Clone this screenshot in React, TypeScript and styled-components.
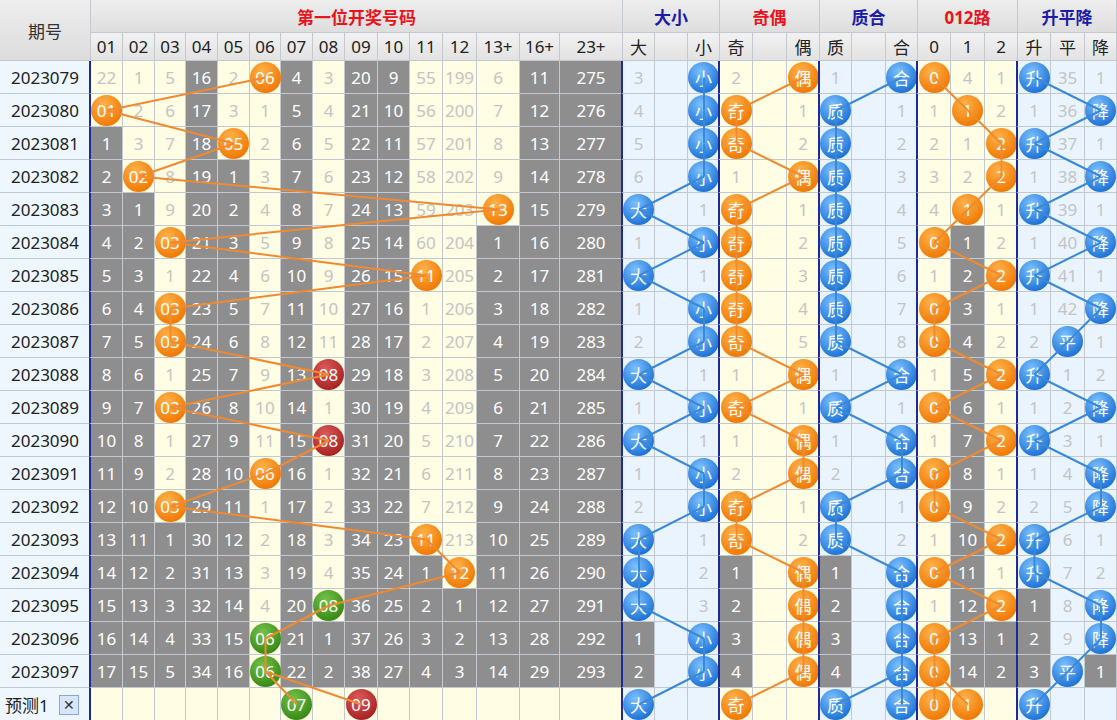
import React from "react"
import styled, { createGlobalStyle } from "styled-components"

const GlobalStyle = createGlobalStyle`
    html, body { margin: 0; padding: 0; background: #fff; }
    body { font-family: "Noto Sans", "Noto Sans CJK SC", sans-serif; }
`

const PERIOD_W = 91
const NUM_W = [32, 32, 31, 32, 32, 31, 32, 32, 33, 32, 33, 34, 43, 40, 63]
const NUM_LABELS = ["01", "02", "03", "04", "05", "06", "07", "08", "09", "10", "11", "12", "13+", "16+", "23+"]
const HEAD1 = 33
const HEAD2 = 28
const ROW_H = 33

const FIRST = [6, 1, 5, 2, 13, 3, 11, 3, 3, 8, 3, 8, 6, 3, 11, 12, 8, 6, 6]
const PERIODS = FIRST.map((_, i) => `2023${String(79 + i).padStart(3, "0")}`)

type Tone = "orange" | "blue" | "red" | "green"
type Section = {
    title: string
    titleColor: string
    labels: string[]
    widths: number[]
    bg: string
    tone: Tone
    hits: number[]
    init: number[]
    blank?: number
    pred: number[]
    ballText: (c: number) => string
    predTone?: (c: number) => Tone
    rowTone?: (r: number) => Tone
}

const numCol = (v: number) => (v <= 12 ? v - 1 : v < 16 ? 12 : v < 23 ? 13 : 14)
const isPrime = (v: number) => [1, 2, 3, 5, 7, 11, 13].includes(v)
const trend = FIRST.map((v, i) => (i === 0 ? 0 : v > FIRST[i - 1] ? 0 : v === FIRST[i - 1] ? 1 : 2))

const SECTIONS: Section[] = [
    {
        title: "第一位开奖号码", titleColor: "#e8141c", labels: NUM_LABELS, widths: NUM_W, bg: "#fffde3", tone: "orange",
        hits: FIRST.map(numCol), init: [21, 0, 4, 15, 1, 0, 3, 2, 19, 8, 54, 198, 5, 10, 274], pred: [6, 8],
        ballText: (c) => "", predTone: (c) => (c === 6 ? "green" : "red"),
        rowTone: (r) => (r === 9 || r === 11 ? "red" : r >= 16 && r !== 16 ? "green" : r === 16 ? "green" : "orange"),
    },
    {
        title: "大小", titleColor: "#1c1ca8", labels: ["大", "", "小"], widths: [32, 33, 32], bg: "#eaf4fe", tone: "blue",
        hits: FIRST.map((v) => (v >= 7 ? 0 : 2)), init: [2, 0, 0], blank: 1, pred: [0], ballText: (c) => (c === 0 ? "大" : "小"),
    },
    {
        title: "奇偶", titleColor: "#e8141c", labels: ["奇", "", "偶"], widths: [33, 34, 33], bg: "#fffde3", tone: "orange",
        hits: FIRST.map((v) => (v % 2 ? 0 : 2)), init: [1, 0, 0], blank: 1, pred: [0], ballText: (c) => (c === 0 ? "奇" : "偶"),
    },
    {
        title: "质合", titleColor: "#1c1ca8", labels: ["质", "", "合"], widths: [32, 34, 32], bg: "#eaf4fe", tone: "blue",
        hits: FIRST.map((v) => (isPrime(v) ? 0 : 2)), init: [0, 0, 0], blank: 1, pred: [0, 2], ballText: (c) => (c === 0 ? "质" : "合"),
    },
    {
        title: "012路", titleColor: "#e8141c", labels: ["0", "1", "2"], widths: [33, 34, 33], bg: "#fffde3", tone: "orange",
        hits: FIRST.map((v) => v % 3), init: [0, 3, 0], pred: [0, 1], ballText: (c) => String(c),
    },
    {
        title: "升平降", titleColor: "#1c1ca8", labels: ["升", "平", "降"], widths: [33, 34, 32], bg: "#eaf4fe", tone: "blue",
        hits: trend, init: [0, 34, 0], pred: [0], ballText: (c) => ["升", "平", "降"][c],
    },
]

type Cell = { text: string; ball: boolean; gray: boolean }

const buildRows = (s: Section): Cell[][] => {
    const miss = s.init.slice()
    const last = s.labels.map((_, c) => s.hits.lastIndexOf(c))
    return s.hits.map((hit, r) =>
        s.labels.map((_, c) => {
            if (c === s.blank) return { text: "", ball: false, gray: false }
            if (hit === c) {
                miss[c] = 0
                return { text: "", ball: true, gray: false }
            }
            miss[c] += 1
            return { text: String(miss[c]), ball: false, gray: r > last[c] }
        })
    )
}

const TONES: Record<Tone, { hi: string; lo: string; line: string }> = {
    orange: { hi: "#ffb24a", lo: "#f07a06", line: "#f08a30" },
    blue: { hi: "#7cc0ff", lo: "#1f74d6", line: "#3a88d8" },
    red: { hi: "#dd5a5a", lo: "#a82424", line: "#f08a30" },
    green: { hi: "#74c248", lo: "#3a8a18", line: "#f08a30" },
}

const App: React.FC = () => {
    let x = PERIOD_W
    const sectionX = SECTIONS.map((s) => {
        const start = x
        const centers = s.widths.map((w) => {
            const cx = x + w / 2
            x += w
            return cx
        })
        return { start, centers }
    })
    const cy = (r: number) => HEAD1 + HEAD2 + r * ROW_H + ROW_H / 2

    const lines: React.ReactNode[] = []
    SECTIONS.forEach((s, si) => {
        const cx = sectionX[si].centers
        const color = TONES[s.tone].line
        for (let r = 0; r < s.hits.length; r++) {
            const targets = r === s.hits.length - 1 ? s.pred : [s.hits[r + 1]]
            targets.forEach((t, k) => {
                lines.push(
                    <line key={`${si}-${r}-${k}`} x1={cx[s.hits[r]]} y1={cy(r)} x2={cx[t]} y2={cy(r + 1)}
                        stroke={color} strokeWidth={2} />
                )
            })
        }
    })

    const grids = SECTIONS.map(buildRows)

    return (
        <>
            <GlobalStyle />
            <Chart>
                <Row>
                    <PeriodHead>期号</PeriodHead>
                    <div>
                        <Row>
                            {SECTIONS.map((s, si) => (
                                <TitleCell key={si} $w={s.widths.reduce((a, b) => a + b, 0)} $color={s.titleColor} $first={si === 0}>
                                    {s.title}
                                </TitleCell>
                            ))}
                        </Row>
                        <Row>
                            {SECTIONS.map((s, si) =>
                                s.labels.map((l, c) => (
                                    <LabelCell key={`${si}-${c}`} $w={s.widths[c]} $sep={c === 0}>{l}</LabelCell>
                                ))
                            )}
                        </Row>
                    </div>
                </Row>
                {PERIODS.map((p, r) => (
                    <Row key={p}>
                        <PeriodCell>{p}</PeriodCell>
                        {SECTIONS.map((s, si) =>
                            grids[si][r].map((cell, c) => {
                                const tone = s.rowTone ? s.rowTone(r) : s.tone
                                return (
                                    <DataCell key={`${si}-${c}`} $w={s.widths[c]} $bg={s.bg} $gray={cell.gray} $sep={c === 0}>
                                        {cell.ball ? <Ball $tone={tone}>{si === 0 ? String(FIRST[r]).padStart(2, "0") : s.ballText(c)}</Ball> : cell.text}
                                    </DataCell>
                                )
                            })
                        )}
                    </Row>
                ))}
                <Row>
                    <PredictCell>
                        预测1<CloseBox>✕</CloseBox>
                    </PredictCell>
                    {SECTIONS.map((s, si) =>
                        s.labels.map((_, c) => {
                            const hit = s.pred.includes(c)
                            const tone = s.predTone ? s.predTone(c) : s.tone
                            return (
                                <DataCell key={`${si}-${c}`} $w={s.widths[c]} $bg={s.bg} $gray={false} $sep={c === 0} $last>
                                    {hit && (
                                        <Ball $tone={tone}>
                                            {si === 0 ? String(c + 1).padStart(2, "0") : s.ballText(c)}
                                        </Ball>
                                    )}
                                </DataCell>
                            )
                        })
                    )}
                </Row>
                <Lines width={1117} height={720}>{lines}</Lines>
            </Chart>
        </>
    )
}

export default App

const Chart = styled.div`
    position: relative;
    width: 1117px;
    height: 720px;
    overflow: hidden;
    font-size: 17px;
`

const Row = styled.div`
    display: flex;
`

const PeriodHead = styled.div`
    width: ${PERIOD_W}px;
    height: ${HEAD1 + HEAD2}px;
    box-sizing: border-box;
    border-right: 1px solid #c4c8cf;
    border-bottom: 1px solid #c4c8cf;
    background: linear-gradient(#eeeeee, #dcdcdc);
    display: flex;
    align-items: center;
    justify-content: center;
    color: #333;
    font-size: 17px;
`

const TitleCell = styled.div<{ $w: number; $color: string; $first: boolean }>`
    width: ${(p) => p.$w}px;
    height: ${HEAD1}px;
    box-sizing: border-box;
    border-right: 1px solid #c4c8cf;
    border-bottom: 1px solid #c4c8cf;
    background: linear-gradient(#eeeeee, #dedede);
    color: ${(p) => p.$color};
    font-weight: bold;
    font-size: 17px;
    display: flex;
    align-items: center;
    justify-content: center;
`

const LabelCell = styled.div<{ $w: number; $sep: boolean }>`
    width: ${(p) => p.$w}px;
    height: ${HEAD2}px;
    box-sizing: border-box;
    border-right: 1px solid #c4c8cf;
    border-bottom: 1px solid #c4c8cf;
    background: linear-gradient(#f2f2f2, #e2e2e2);
    color: #222;
    display: flex;
    align-items: center;
    justify-content: center;
`

const PeriodCell = styled.div`
    width: ${PERIOD_W}px;
    height: ${ROW_H}px;
    box-sizing: border-box;
    border-right: 1px solid #c4c8cf;
    border-bottom: 1px solid #c4c8cf;
    background: #eef7fe;
    color: #222;
    display: flex;
    align-items: center;
    justify-content: center;
`

const PredictCell = styled(PeriodCell)`
    justify-content: flex-start;
    padding-left: 5px;
    gap: 10px;
    border-bottom: none;
`

const CloseBox = styled.span`
    width: 18px;
    height: 18px;
    border: 1px solid #8aa6d8;
    background: #d8e6fb;
    color: #333;
    font-size: 14px;
    display: inline-flex;
    align-items: center;
    justify-content: center;
`

const DataCell = styled.div<{ $w: number; $bg: string; $gray: boolean; $sep: boolean; $last?: boolean }>`
    width: ${(p) => p.$w}px;
    height: ${ROW_H}px;
    box-sizing: border-box;
    border-right: 1px solid #c4c8cf;
    border-bottom: ${(p) => (p.$last ? "none" : "1px solid #c4c8cf")};
    border-left: ${(p) => (p.$sep ? "2px solid #1e2a96" : "none")};
    margin-left: ${(p) => (p.$sep ? "-2px" : "0")};
    width: ${(p) => p.$w + (p.$sep ? 2 : 0)}px;
    background: ${(p) => (p.$gray ? "#8e8e8e" : p.$bg)};
    color: ${(p) => (p.$gray ? "#fff" : "#c4c4c4")};
    display: flex;
    align-items: center;
    justify-content: center;
    position: relative;
    z-index: 0;
`

const Ball = styled.div<{ $tone: Tone }>`
    position: absolute;
    left: 50%;
    top: 50%;
    width: 31px;
    height: 31px;
    margin: -15.5px 0 0 -15.5px;
    border-radius: 50%;
    background: radial-gradient(circle at 40% 30%, ${(p) => TONES[p.$tone].hi}, ${(p) => TONES[p.$tone].lo} 75%);
    color: #fff;
    font-size: 17px;
    display: flex;
    align-items: center;
    justify-content: center;
    z-index: 2;
`

const Lines = styled.svg`
    position: absolute;
    left: 0;
    top: 0;
    pointer-events: none;
    z-index: 1;
`
